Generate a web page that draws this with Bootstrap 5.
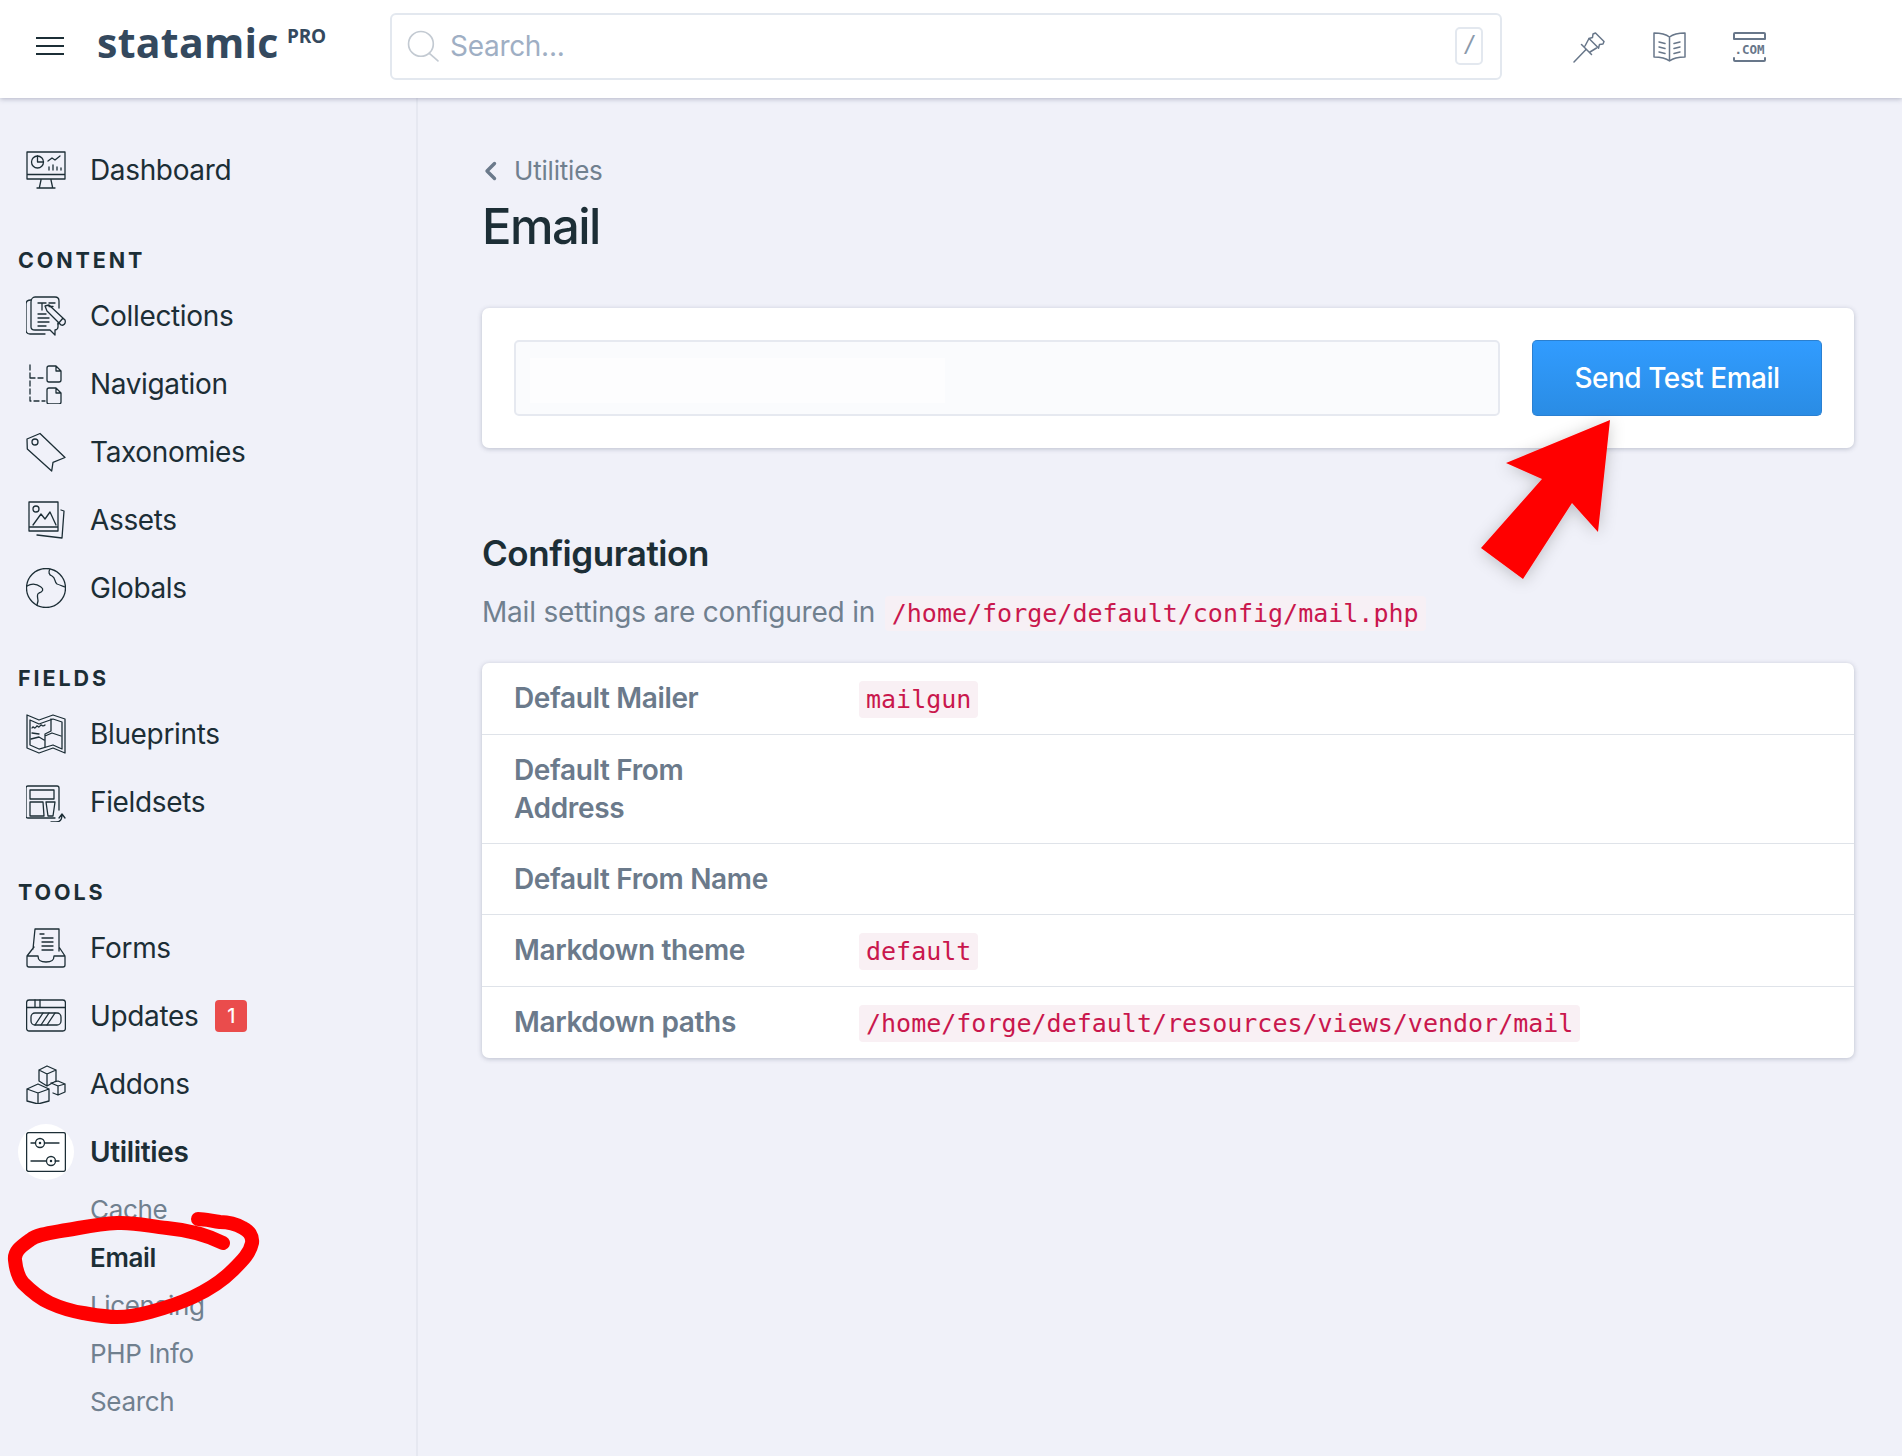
<!DOCTYPE html>
<html lang="en">
<head>
<meta charset="utf-8">
<title>Email - Statamic</title>
<link href="https://cdn.jsdelivr.net/npm/bootstrap@5.3.0/dist/css/bootstrap.min.css" rel="stylesheet">
<style>
html,body{height:1456px;overflow:hidden}
body{background:#f0f1f9;font-family:Inter,"Liberation Sans",sans-serif;font-size:28px;color:#1c2e36;position:relative}
.topbar{height:98px;background:#fff;box-shadow:0 1px 5px rgba(60,70,100,.35);position:relative;z-index:2;padding:0 0 6px}
.burger{width:28px;margin-left:36px;margin-right:33px;display:flex}
.logo-text{font-family:"Open Sans","Noto Sans",sans-serif;font-weight:700;font-size:41px;line-height:60px;color:#34495e;width:190px;letter-spacing:.3px;margin-bottom:9px}
.logo-pro{font-family:"Open Sans",sans-serif;font-weight:700;font-size:19px;line-height:24px;color:#34495e;align-self:flex-start;margin-top:24px;letter-spacing:-.2px;width:103px}
.searchbox{width:1112px;height:67px;border:2px solid #e3e8ef;border-radius:6px;padding:0 17px 0 15px;color:#9fb0c5;gap:10px}
.searchbox input{border:0;outline:0;flex:1;min-width:0;font-size:28px;color:#1c2e36;padding:0;background:transparent;letter-spacing:-.3px}
.searchbox input::placeholder{color:#9fafc4;opacity:1}
.slash{width:28px;height:38px;border:2px solid #e3e8ef;border-radius:5px;font-size:26px;line-height:32px;text-align:center;font-style:italic;color:#8a99ab;font-family:"Liberation Sans",sans-serif}
.tool-icons{margin-left:71px;gap:47px}
.side{width:418px;flex:none;height:1358px;border-right:2px solid #e6e8f1;padding-top:38px}
.nav-row{height:68px;padding-left:26px;gap:24px;color:#1c2e36;letter-spacing:-.35px}
.nav-row svg,.tool-icons svg{flex:none;fill:none;stroke:currentColor;stroke-linecap:round;stroke-linejoin:round}
.nav-row svg{stroke-width:1.3}
.tool-icons svg{stroke-width:1.5;color:#68778a}
.side-head{margin:44px 0 10px 18px;font-size:21.5px;line-height:24px;font-weight:700;letter-spacing:2.9px}
.icon-halo{width:40px;height:40px;position:relative}
.icon-halo::before{content:"";position:absolute;left:-8px;top:-8px;width:56px;height:56px;border-radius:50%;background:#fff}
.icon-halo svg{position:relative;display:block}
.is-current{font-weight:600}
.sub-row{height:48px;line-height:48px;padding-left:90px;font-size:26px;color:#70808f;letter-spacing:-.35px}
.sub-row.on{color:#1c2e36;font-weight:600}
.count-pill{width:32px;height:32px;background:#ea4c4c;color:#fff;border-radius:4px;font-size:19.5px;line-height:32px;text-align:center;margin-left:-7px;font-weight:500;letter-spacing:0}
.content{padding:53px 48px 0 64px;flex:1;min-width:0}
.crumb{height:40px;line-height:40px;font-size:26px;color:#70808f;gap:17px;padding-left:2px;letter-spacing:-.2px}
.page-title{font-size:49px;line-height:60px;font-weight:500;margin:6px 0 51px;color:#1c2e36;letter-spacing:-1.55px}
.panel{border:0;border-radius:7px;box-shadow:0 1px 5px rgba(50,60,90,.28);background:#fff}
.panel .card-body{padding:32px;gap:32px}
.mail-input{height:76px;flex:1;border:2px solid #e6e9f0;border-radius:5px;background:#fafbfd linear-gradient(#fdfdfe,#fdfdfe) no-repeat 14px 16px/415px 45px}
.send-btn{width:290px;height:76px;font-size:28px;font-weight:500;color:#fff;background:linear-gradient(#319cff,#2a8ce4);border:1px solid #2a80d2;border-top-color:#2b7fce;border-radius:5px;padding:0;letter-spacing:-.5px}
.conf-title{font-size:35px;line-height:44px;font-weight:600;margin:83px 0 15px;color:#1c2e36;letter-spacing:-.45px}
.conf-sub{font-size:28px;line-height:44px;height:44px;color:#70808f;margin:0 0 29px;letter-spacing:-.2px}
code{font-family:"DejaVu Sans Mono","Liberation Mono",monospace;font-size:25px;color:#c9174d;background:#f9f0f4;padding:3px 7px;border-radius:4px;letter-spacing:0}
.conf-sub code{margin-left:2px;background:#f7f0f5}
.conf-panel{overflow:hidden}
.conf-table{margin:0;--bs-table-bg:transparent}
.conf-table th,.conf-table td{padding:16px 0;height:71px;line-height:38px;border-bottom:1px solid #dfe3e9;font-size:28px}
.conf-table tr:last-child th,.conf-table tr:last-child td{border-bottom:0}
.conf-table th{width:377px;padding-left:32px;padding-right:85px;font-weight:600;color:#6b7a8b;letter-spacing:-.35px}
.conf-table td code{display:inline-block;line-height:31px;vertical-align:middle;margin-top:-2px}
.ink{position:absolute;left:0;top:0;z-index:5;pointer-events:none}
</style>
</head>
<body>
<nav class="navbar topbar flex-nowrap justify-content-start align-items-center">
  <span class="burger"><svg width="28" height="20" viewBox="0 0 28 20" stroke="#1c2e36" stroke-width="2.2"><path d="M0 2H28M0 10H28M0 18H28"/></svg></span>
  <span class="logo-text">statamic</span><span class="logo-pro">PRO</span>
  <div class="searchbox d-flex align-items-center">
    <svg width="33" height="33" viewBox="0 0 32 32" fill="none" stroke="#c3cad2" stroke-width="1.6" stroke-linecap="round"><circle cx="13.5" cy="13.5" r="12"/><path d="M22 23l8 7"/></svg>
    <input type="text" placeholder="Search...">
    <span class="slash">/</span>
  </div>
  <div class="tool-icons d-flex align-items-center">
    <svg width="33" height="33" viewBox="0 0 33 33"><path d="M1 32L13 19.5M8.5 14.5l10 10M12 16l4-7.5M17 22l6.500-4M16 8.500l3.500-1L20 4l2.500-1 8.500 8.500-1 2.500-3.500.5-1 3.500"/><path d="M16 8.500l9.500 9.500"/></svg>
    <svg width="33" height="33" viewBox="0 0 33 33"><path d="M16.500 7C12 3.500 6 3 1 3v24c5 0 11 .5 15.500 4 4.500-3.500 10.500-4 15.500-4V3c-5 0-11 .5-15.500 4zM16.500 7v24M6 12l6 1.500M6 17l6 1.500M6 22l6 1.500M27 12l-6 1.500M27 17l-6 1.500M27 22l-6 1.500"/></svg>
    <svg width="33" height="33" viewBox="0 0 33 33"><path stroke-width="2" d="M1 9V4q0-1 1-1h29q1 0 1 1v5zM1 28v2q0 1 1 1h29q1 0 1-1v-2"/><text x="1.500" y="24" font-family="'DejaVu Sans Mono',monospace" font-size="12.500" font-weight="700" fill="#68778a" stroke="none">.COM</text></svg>
  </div>
</nav>

<div class="d-flex">
  <aside class="side">
    <div class="nav-row d-flex align-items-center"><svg width="40" height="40" viewBox="0 0 40 40"><path d="M1 2h38v27H1zM1 24.500h38M15 30l-1.500 7M25 30l1.500 7M11 38h18"/><circle cx="11.500" cy="12" r="6"/><path d="M11.500 6v6h6M22 11l4-3 3 2 5-4M23 20v-3M27 20v-5M31 20v-3M35 20v-2"/></svg><span>Dashboard</span></div>

    <div class="side-head">CONTENT</div>
    <div class="nav-row d-flex align-items-center"><svg width="40" height="40" viewBox="0 0 40 40"><path d="M5 4C2 4 0 5 0 8v26c0 3 2 4 4 4h15"/><path d="M5 31V6c0-3 2-5 4-5h20c3 0 4 2 4 4v7M5 31c0 2 2 3 4 3h15l5 5v-5c1 0 3-1 3-3v-4"/><path d="M12 7h8M16 7v7M23 7h6M23 10.500h4M12 18h8M12 22h11M12 26h11M12 30h8"/><path d="M19 10l4-1 16 15c1 3-1 6-4 5L21 15zM32 28l5-6"/></svg><span>Collections</span></div>
    <div class="nav-row d-flex align-items-center"><svg width="40" height="40" viewBox="0 0 40 40"><path stroke-dasharray="5 3" d="M4 1v36h15M4 14h15"/><path d="M21 4q0-2 2-2h7l5 5v9q0 2-2 2H23q-2 0-2-2zM30 2v5h5M21 26q0-2 2-2h7l5 5v9q0 2-2 2H23q-2 0-2-2zM30 24v5h5"/></svg><span>Navigation</span></div>
    <div class="nav-row d-flex align-items-center"><svg width="40" height="40" viewBox="0 0 40 40"><path d="M1 7l13-5.500L39 25.500 27 30.300 25.700 39 1.300 17z"/><circle cx="9" cy="10" r="3"/></svg><span>Taxonomies</span></div>
    <div class="nav-row d-flex align-items-center"><svg width="40" height="40" viewBox="0 0 40 40"><path d="M3 2h29v29H3zM3 27h29M7 25l8-11 4 5 5-7 6 13"/><circle cx="10" cy="9" r="3"/><path d="M35 10l3 1-2 27-25-3"/></svg><span>Assets</span></div>
    <div class="nav-row d-flex align-items-center"><svg width="40" height="40" viewBox="0 0 40 40"><circle cx="20" cy="20" r="19.500"/><path d="M1 18c5-3 10-2 14 1 3 2 2 5-2 6-3 1-1 5-1 8l-1 4M24 1c-2 3-1 6 2 7 4 2 2 6 5 8 3 1 5 2 8 3"/></svg><span>Globals</span></div>

    <div class="side-head">FIELDS</div>
    <div class="nav-row d-flex align-items-center"><svg width="40" height="40" viewBox="0 0 40 40"><path d="M1 1l12 5 14-5 12 4v34l-12-5-14 5-12-5zM4 6v25l9 4 14-4 9 4V8l-9-3-14 5z"/><path d="M6 14c2-3 2 2 4-1s2 2 4-1 2 2 5-1M6 19l7 1M25 5v12l-6 3v13M5 25l8-2 5 3M19 22l7-3 9 3"/></svg><span>Blueprints</span></div>
    <div class="nav-row d-flex align-items-center"><svg width="40" height="40" viewBox="0 0 40 40"><path d="M29 36H2q-2 0-2-2V6q0-2 2-2h29q2 0 2 2v22"/><path d="M4 8h24v9H4zM4 20h13l1 14H4zM20 20h9l-2 14h-5z"/><path d="M25 40h5c4 0 6-2 6-7M33 36l3-4 3 4"/></svg><span>Fieldsets</span></div>

    <div class="side-head">TOOLS</div>
    <div class="nav-row d-flex align-items-center"><svg width="40" height="40" viewBox="0 0 40 40"><path d="M7 21L9 1h24v22M1 28l7-9M39 28l-6-9M1 28v9q0 2 2 2h34q2 0 2-2v-9H28c0 5-3 6-8 6s-8-1-8-6z"/><path d="M14 6h4M16 10h11M16 14h11M16 18h11M16 22h11"/></svg><span>Forms</span></div>
    <div class="nav-row d-flex align-items-center"><svg width="40" height="40" viewBox="0 0 40 40"><rect x="0.600" y="4" width="38.800" height="31" rx="2.500"/><path d="M1 11.500h38M9 4v7.500M14 4v7.500"/><rect x="5" y="17" width="30" height="12" rx="4"/><path d="M9 29l8-12M15 29l8-12M21 29l8-12"/></svg><span>Updates</span><span class="count-pill">1</span></div>
    <div class="nav-row d-flex align-items-center"><svg width="40" height="40" viewBox="0 0 40 40"><path d="M13 6l8-4 9 4v11l-9 5-8-5zM13 6l8 4 9-4M21 10v12M1 25l11-5 11 5v12l-11 3-11-3zM1 25l11 4 11-4M12 29v11M25 19l7-2 7 3v8l-7 3-5-2M25 19l7 3 7-2M32 22v9"/></svg><span>Addons</span></div>
    <div class="nav-row d-flex align-items-center"><span class="icon-halo"><svg width="40" height="40" viewBox="0 0 40 40"><rect x="0.600" y="0.600" width="38.800" height="38.800" rx="2"/><circle cx="14" cy="11" r="4.500"/><circle cx="14" cy="11" r=".6"/><path d="M5 11h4.500M18.500 11H33M5 29h15M29 29h4"/><circle cx="25" cy="29" r="4.500"/><circle cx="25" cy="29" r=".6"/></svg></span><span class="is-current">Utilities</span></div>
    <div class="sub-row">Cache</div>
    <div class="sub-row on">Email</div>
    <div class="sub-row">Licensing</div>
    <div class="sub-row">PHP Info</div>
    <div class="sub-row">Search</div>
  </aside>

  <main class="content">
    <div class="crumb d-flex align-items-center"><svg width="13" height="20" viewBox="0 0 13 20" fill="none" stroke="#6b7a8b" stroke-width="3.400" stroke-linecap="round" stroke-linejoin="round"><path d="M10.500 2.500L3 10l7.500 7.500"/></svg><span>Utilities</span></div>
    <h1 class="page-title">Email</h1>

    <div class="card panel">
      <div class="card-body d-flex align-items-center">
        <input type="text" class="form-control mail-input" aria-label="Email address">
        <button type="button" class="btn send-btn">Send Test Email</button>
      </div>
    </div>

    <h2 class="conf-title">Configuration</h2>
    <p class="conf-sub">Mail settings are configured in <code>/home/forge/default/config/mail.php</code></p>

    <div class="card panel conf-panel">
      <table class="table conf-table align-middle">
        <tbody>
          <tr><th scope="row">Default Mailer</th><td><code>mailgun</code></td></tr>
          <tr><th scope="row">Default From Address</th><td></td></tr>
          <tr><th scope="row">Default From Name</th><td></td></tr>
          <tr><th scope="row">Markdown theme</th><td><code>default</code></td></tr>
          <tr><th scope="row">Markdown paths</th><td><code>/home/forge/default/resources/views/vendor/mail</code></td></tr>
        </tbody>
      </table>
    </div>
  </main>
</div>

<svg class="ink" width="1902" height="1456" viewBox="0 0 1902 1456" aria-hidden="true">
  <defs><filter id="arrowShade" x="-30%" y="-30%" width="160%" height="160%"><feDropShadow dx="0" dy="2" stdDeviation="8" flood-color="#000" flood-opacity=".22"/></filter></defs>
  <path fill="#ff0000" filter="url(#arrowShade)" d="M1610 420L1506 463 1542 479 1481 548 1523 579 1572 503 1598 532z"/>
  <path fill="none" stroke="#ff0000" stroke-width="14" stroke-linecap="round" stroke-linejoin="round" d="M223 1243C205 1234 188 1230 167 1228 148 1226 135 1222 117 1223 98 1224 85 1227 67 1230 50 1233 38 1234 30 1240 20 1247 14 1252 15 1260 16 1270 18 1277 23 1283 31 1291 39 1298 50 1303 61 1308 71 1311 83 1313 95 1315 105 1317 117 1317 129 1317 139 1315 150 1312 165 1308 178 1304 193 1297 208 1290 222 1281 233 1270 243 1260 250 1253 252 1243 253 1236 249 1231 243 1228 236 1224 229 1222 220 1222 212 1221 205 1219 198 1219"/>
</svg>
</body>
</html>
